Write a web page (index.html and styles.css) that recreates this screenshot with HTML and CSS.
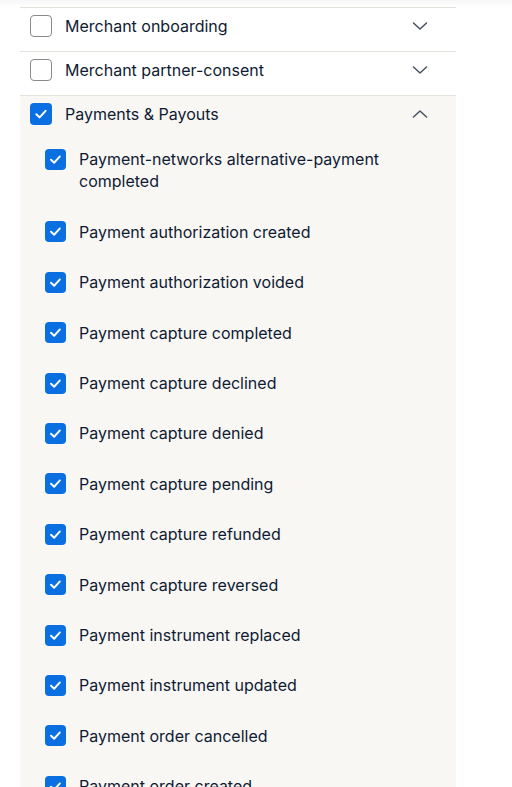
FILE: index.html
```html
<!DOCTYPE html>
<html>
<head>
<meta charset="utf-8">
<link rel="stylesheet" href="styles.css">
</head>
<body>
<div class="topshade"></div>
<div class="list">
  <div class="group">
    <div class="head">
      <span class="box"></span>
      <span class="label">Merchant onboarding</span>
      <svg class="chev" viewBox="0 0 16 10" width="16" height="10"><path d="M1.5 2 L8 8 L14.5 2" fill="none" stroke="#4b5563" stroke-width="1.6" stroke-linecap="round" stroke-linejoin="round"/></svg>
    </div>
  </div>
  <div class="group">
    <div class="head">
      <span class="box"></span>
      <span class="label">Merchant partner-consent</span>
      <svg class="chev" viewBox="0 0 16 10" width="16" height="10"><path d="M1.5 2 L8 8 L14.5 2" fill="none" stroke="#4b5563" stroke-width="1.6" stroke-linecap="round" stroke-linejoin="round"/></svg>
    </div>
  </div>
  <div class="group open">
    <div class="head">
      <span class="box on"><svg viewBox="0 0 22 22" width="22" height="22"><path d="M6.3 11.2 L9.6 14.4 L15.6 7.8" fill="none" stroke="#fff" stroke-width="2" stroke-linecap="round" stroke-linejoin="round"/></svg></span>
      <span class="label">Payments &amp; Payouts</span>
      <svg class="chev" viewBox="0 0 16 10" width="16" height="10"><path d="M1.5 8 L8 2 L14.5 8" fill="none" stroke="#4b5563" stroke-width="1.6" stroke-linecap="round" stroke-linejoin="round"/></svg>
    </div>
    <div class="items">
      <div class="item"><span class="box on sm"><svg viewBox="0 0 22 22" width="21" height="21"><path d="M6.3 11.2 L9.6 14.4 L15.6 7.8" fill="none" stroke="#fff" stroke-width="2" stroke-linecap="round" stroke-linejoin="round"/></svg></span><span class="text">Payment-networks alternative-payment completed</span></div>
      <div class="item"><span class="box on sm"><svg viewBox="0 0 22 22" width="21" height="21"><path d="M6.3 11.2 L9.6 14.4 L15.6 7.8" fill="none" stroke="#fff" stroke-width="2" stroke-linecap="round" stroke-linejoin="round"/></svg></span><span class="text">Payment authorization created</span></div>
      <div class="item"><span class="box on sm"><svg viewBox="0 0 22 22" width="21" height="21"><path d="M6.3 11.2 L9.6 14.4 L15.6 7.8" fill="none" stroke="#fff" stroke-width="2" stroke-linecap="round" stroke-linejoin="round"/></svg></span><span class="text">Payment authorization voided</span></div>
      <div class="item"><span class="box on sm"><svg viewBox="0 0 22 22" width="21" height="21"><path d="M6.3 11.2 L9.6 14.4 L15.6 7.8" fill="none" stroke="#fff" stroke-width="2" stroke-linecap="round" stroke-linejoin="round"/></svg></span><span class="text">Payment capture completed</span></div>
      <div class="item"><span class="box on sm"><svg viewBox="0 0 22 22" width="21" height="21"><path d="M6.3 11.2 L9.6 14.4 L15.6 7.8" fill="none" stroke="#fff" stroke-width="2" stroke-linecap="round" stroke-linejoin="round"/></svg></span><span class="text">Payment capture declined</span></div>
      <div class="item"><span class="box on sm"><svg viewBox="0 0 22 22" width="21" height="21"><path d="M6.3 11.2 L9.6 14.4 L15.6 7.8" fill="none" stroke="#fff" stroke-width="2" stroke-linecap="round" stroke-linejoin="round"/></svg></span><span class="text">Payment capture denied</span></div>
      <div class="item"><span class="box on sm"><svg viewBox="0 0 22 22" width="21" height="21"><path d="M6.3 11.2 L9.6 14.4 L15.6 7.8" fill="none" stroke="#fff" stroke-width="2" stroke-linecap="round" stroke-linejoin="round"/></svg></span><span class="text">Payment capture pending</span></div>
      <div class="item"><span class="box on sm"><svg viewBox="0 0 22 22" width="21" height="21"><path d="M6.3 11.2 L9.6 14.4 L15.6 7.8" fill="none" stroke="#fff" stroke-width="2" stroke-linecap="round" stroke-linejoin="round"/></svg></span><span class="text">Payment capture refunded</span></div>
      <div class="item"><span class="box on sm"><svg viewBox="0 0 22 22" width="21" height="21"><path d="M6.3 11.2 L9.6 14.4 L15.6 7.8" fill="none" stroke="#fff" stroke-width="2" stroke-linecap="round" stroke-linejoin="round"/></svg></span><span class="text">Payment capture reversed</span></div>
      <div class="item"><span class="box on sm"><svg viewBox="0 0 22 22" width="21" height="21"><path d="M6.3 11.2 L9.6 14.4 L15.6 7.8" fill="none" stroke="#fff" stroke-width="2" stroke-linecap="round" stroke-linejoin="round"/></svg></span><span class="text">Payment instrument replaced</span></div>
      <div class="item"><span class="box on sm"><svg viewBox="0 0 22 22" width="21" height="21"><path d="M6.3 11.2 L9.6 14.4 L15.6 7.8" fill="none" stroke="#fff" stroke-width="2" stroke-linecap="round" stroke-linejoin="round"/></svg></span><span class="text">Payment instrument updated</span></div>
      <div class="item"><span class="box on sm"><svg viewBox="0 0 22 22" width="21" height="21"><path d="M6.3 11.2 L9.6 14.4 L15.6 7.8" fill="none" stroke="#fff" stroke-width="2" stroke-linecap="round" stroke-linejoin="round"/></svg></span><span class="text">Payment order cancelled</span></div>
      <div class="item"><span class="box on sm"><svg viewBox="0 0 22 22" width="21" height="21"><path d="M6.3 11.2 L9.6 14.4 L15.6 7.8" fill="none" stroke="#fff" stroke-width="2" stroke-linecap="round" stroke-linejoin="round"/></svg></span><span class="text">Payment order created</span></div>
    </div>
  </div>
</div>
</body>
</html>
```
FILE: styles.css
```css
html, body {
  margin: 0;
  padding: 0;
  background: #fff;
  overflow: hidden;
  height: 787px;
}
body {
  font-family: Inter, "Noto Sans", sans-serif;
  font-size: 16px;
  color: #0f1a33;
}
.topshade {
  height: 7px;
  background: linear-gradient(to bottom, rgba(0,0,0,0.035), rgba(0,0,0,0));
}
.list {
  margin-left: 20px;
  width: 436px;
}
.group {
  border-top: 1px solid #e4e1da;
}
.group.open {
  background: #f8f7f4;
}
.head {
  display: flex;
  align-items: center;
  padding: 7px 28px 14px 10px;
  height: 22px;
}
.box {
  flex: none;
  width: 22px;
  height: 22px;
  box-sizing: border-box;
  border: 1px solid #8a8a8a;
  border-radius: 4px;
  background: #fff;
  display: flex;
  align-items: center;
  justify-content: center;
}
.box.on {
  border: none;
  background: #0a6fe0;
}
.box.sm {
  width: 21px;
  height: 21px;
}
.label {
  flex: 1;
  margin-left: 13px;
  line-height: 22px;
}
.chev {
  flex: none;
  display: block;
}
.items {
  padding: 9px 40px 0 25px;
  display: flex;
  flex-direction: column;
  gap: 28px;
}
.item {
  display: flex;
  align-items: flex-start;
}
.item .box {
  margin-top: 0.5px;
}
.text {
  margin-left: 13px;
  line-height: 22.4px;
}
```
